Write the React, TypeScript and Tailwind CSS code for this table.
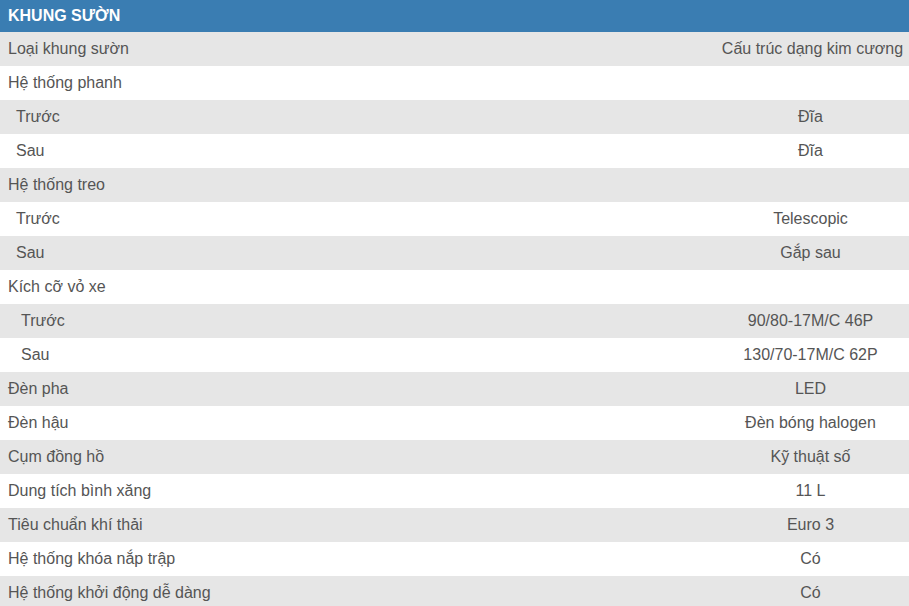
import React from "react";

type Row = { label: string; value?: string; indent?: number; shift?: boolean };

const rows: Row[] = [
  { label: "Loại khung sườn", value: "Cấu trúc dạng kim cương", shift: true },
  { label: "Hệ thống phanh" },
  { label: "Trước", value: "Đĩa", indent: 1 },
  { label: "Sau", value: "Đĩa", indent: 1 },
  { label: "Hệ thống treo" },
  { label: "Trước", value: "Telescopic", indent: 1 },
  { label: "Sau", value: "Gắp sau", indent: 1 },
  { label: "Kích cỡ vỏ xe" },
  { label: "Trước", value: "90/80-17M/C 46P", indent: 2 },
  { label: "Sau", value: "130/70-17M/C 62P", indent: 2 },
  { label: "Đèn pha", value: "LED" },
  { label: "Đèn hậu", value: "Đèn bóng halogen" },
  { label: "Cụm đồng hồ", value: "Kỹ thuật số" },
  { label: "Dung tích bình xăng", value: "11 L" },
  { label: "Tiêu chuẩn khí thải", value: "Euro 3" },
  { label: "Hệ thống khóa nắp trập", value: "Có" },
  { label: "Hệ thống khởi động dễ dàng", value: "Có" },
];

export default function App() {
  return (
    <div
      className="w-[909px] h-[606px] overflow-hidden bg-white text-[16px] text-[#555555]"
      style={{ fontFamily: '"Liberation Sans", Arial, sans-serif' }}
    >
      <div className="h-[32px] bg-[#3a7db2] flex items-center pl-[8px] text-white font-bold text-[16px]">
        KHUNG SƯỜN
      </div>
      {rows.map((r, i) => (
        <div
          key={i}
          className={
            "h-[34px] grid grid-cols-[1fr_197px] items-center " +
            (i % 2 === 0 ? "bg-[#e6e6e6]" : "bg-white")
          }
        >
          <div
            className={
              r.indent === 2 ? "pl-[21px]" : r.indent === 1 ? "pl-[16px]" : "pl-[8px]"
            }
          >
            {r.label}
          </div>
          <div className={"text-center whitespace-nowrap" + (r.shift ? " pl-[4px]" : "")}>
            {r.value ?? ""}
          </div>
        </div>
      ))}
    </div>
  );
}
